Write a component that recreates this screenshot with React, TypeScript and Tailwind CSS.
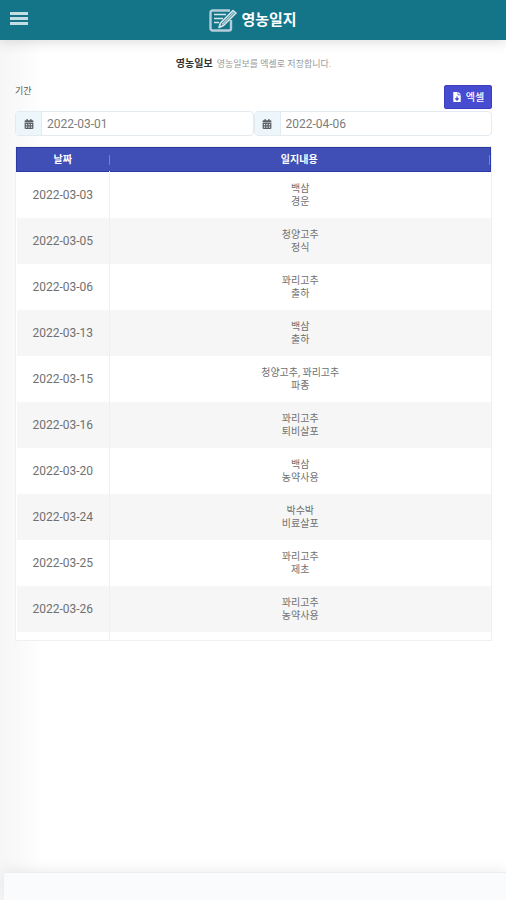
import { useState } from "react";
import { FaCalendarAlt, FaFileDownload } from "react-icons/fa";

const entries = [
  { date: "2022-03-03", crop: "백삼", work: "경운" },
  { date: "2022-03-05", crop: "청양고추", work: "정식" },
  { date: "2022-03-06", crop: "꽈리고추", work: "출하" },
  { date: "2022-03-13", crop: "백삼", work: "출하" },
  { date: "2022-03-15", crop: "청양고추, 꽈리고추", work: "파종" },
  { date: "2022-03-16", crop: "꽈리고추", work: "퇴비살포" },
  { date: "2022-03-20", crop: "백삼", work: "농약사용" },
  { date: "2022-03-24", crop: "박수박", work: "비료살포" },
  { date: "2022-03-25", crop: "꽈리고추", work: "제초" },
  { date: "2022-03-26", crop: "꽈리고추", work: "농약사용" },
];

function NoteIcon() {
  return (
    <svg viewBox="0 0 28 24" className="h-6 w-7" fill="none" stroke="#b4cdd8" strokeWidth="2.4" aria-hidden="true">
      <path d="M22 12v8.500a2 2 0 0 1-2 2H3.500a2 2 0 0 1-2-2v-16a2 2 0 0 1 2-2H21" />
      <path d="M5 6.500h12M5 10.500h9M5 14.500h5" stroke="#d6e6ea" strokeWidth="1.700" />
      <path d="M10 19.500l1.500-4.500L24 2.500l3 2.500-12.500 12.500z" fill="#147589" stroke="#d6e6ea" strokeWidth="1.600" strokeLinejoin="round" />
      <path d="M13 16.500L25 4" strokeWidth="1.600" />
    </svg>
  );
}

type DateFieldProps = {
  id: string;
  label: string;
  value: string;
  onChange: (value: string) => void;
};

function DateField({ id, label, value, onChange }: DateFieldProps) {
  return (
    <div className="flex h-[25px] min-w-0 flex-1 items-center rounded-sm border border-[#e3ebf0] bg-white">
      <label
        htmlFor={id}
        aria-label={label}
        className="flex w-[26px] shrink-0 items-center justify-center self-stretch border-r border-[#e3ebf0] bg-[#edf6fb]"
      >
        <FaCalendarAlt className="size-[10px] text-[#5a6065]" aria-hidden="true" />
      </label>
      <input
        id={id}
        type="text"
        aria-label={label}
        value={value}
        onChange={(e) => onChange(e.target.value)}
        className="w-full min-w-0 px-[5px] text-xs text-[#7d7d7d] outline-none"
      />
    </div>
  );
}

export default function App() {
  const [from, setFrom] = useState("2022-03-01");
  const [to, setTo] = useState("2022-04-06");

  return (
    <div className="flex min-h-screen flex-col bg-linear-to-r from-[#f6f6f6] to-white to-[45px] font-[Roboto,'Noto_Sans_CJK_KR',sans-serif]">
      <header className="grid h-10 grid-cols-[1fr_auto_1fr] items-center bg-[#147589] px-[10px] shadow-[0_2px_12px_rgba(0,0,0,0.14)]">
        <button type="button" aria-label="메뉴" className="mb-1 flex w-[18px] flex-col gap-[2px]">
          <span className="h-[3px] bg-[#c3dde3]" />
          <span className="h-[3px] bg-[#c3dde3]" />
          <span className="h-[3px] bg-[#c3dde3]" />
        </button>
        <div className="flex items-center gap-1">
          <NoteIcon />
          <span className="text-[15px] leading-5 font-bold text-white">영농일지</span>
        </div>
      </header>

      <main className="flex-1 pt-4 pr-[14px] pl-[15px]">
        <div className="flex items-center justify-center gap-1 leading-4">
          <h1 className="text-[10px] font-bold text-[#333]">영농일보</h1>
          <p className="text-[9px] text-[#999]">영농일보를 엑셀로 저장합니다.</p>
        </div>

        <div className="mt-[13px] flex items-start justify-between">
          <span className="text-[9px] leading-3 text-[#555]">기간</span>
          <button
            type="button"
            className="flex h-6 w-12 items-center justify-center gap-1 rounded-xs border border-[#3c3fc0] bg-[#474bcf] text-[10px] font-medium text-white"
          >
            <FaFileDownload className="size-[10px]" aria-hidden="true" />
            엑셀
          </button>
        </div>

        <div className="mt-[2px] flex">
          <DateField id="from" label="시작일" value={from} onChange={setFrom} />
          <DateField id="to" label="종료일" value={to} onChange={setTo} />
        </div>

        <div className="mt-[10px] border border-[#efefef] bg-white">
          <table className="w-full table-fixed border-collapse text-center text-[#707070]">
            <thead>
              <tr className="h-6 border border-[#2b3aa6] bg-[#3f4fb6] text-[10px] text-white">
                <th className="w-[93px] p-0 font-bold">
                  <div className="border-r border-[#7582d0] leading-[10px]">날짜</div>
                </th>
                <th className="p-0 font-bold">
                  <div className="border-r border-[#7582d0] leading-[10px]">일지내용</div>
                </th>
              </tr>
            </thead>
            <tbody>
              {entries.map((entry) => (
                <tr key={entry.date} className="h-[46px] even:bg-[#f6f6f6]">
                  <td className="border-r border-[#efefef] p-0 text-xs">{entry.date}</td>
                  <td className="p-0 text-[10px] leading-[13px]">
                    {entry.crop}
                    <br />
                    {entry.work}
                  </td>
                </tr>
              ))}
              <tr className="h-2">
                <td className="border-r border-[#efefef] p-0" />
                <td className="p-0" />
              </tr>
            </tbody>
          </table>
        </div>
      </main>

      <footer className="ml-1 h-7 border-t border-[#eaeef0] bg-[#fafbfd] shadow-[0_-2px_14px_rgba(0,0,0,0.07)]" />
    </div>
  );
}
